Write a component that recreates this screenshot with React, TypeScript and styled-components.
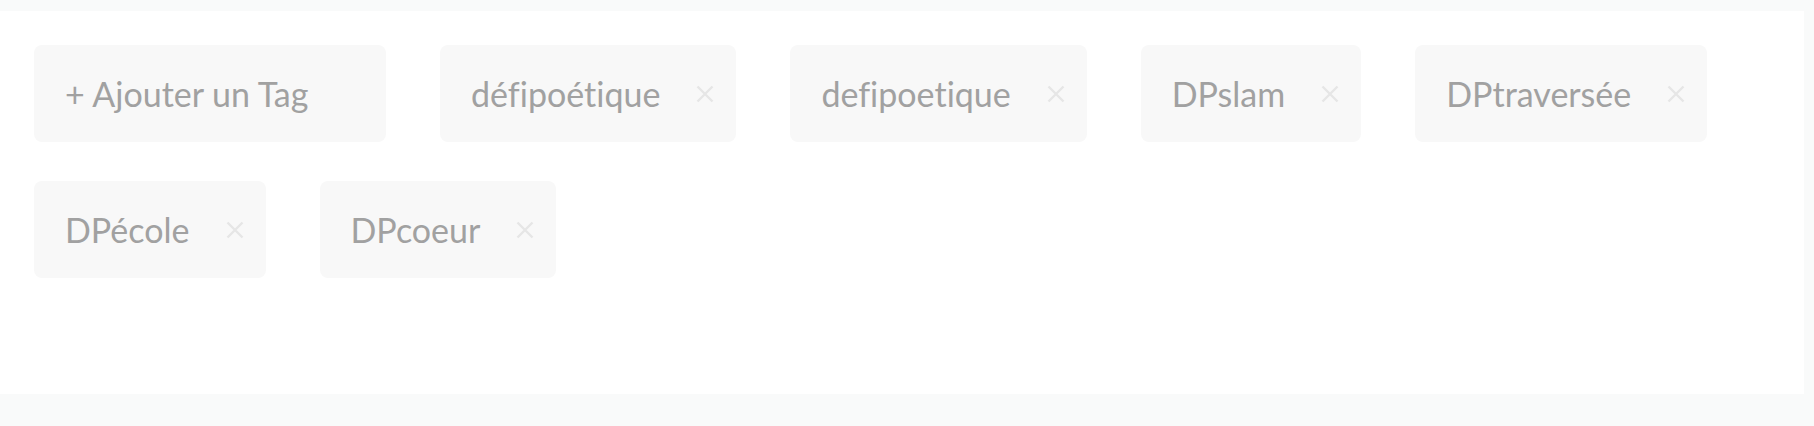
import React from "react";
import styled, { createGlobalStyle } from "styled-components";

const Global = createGlobalStyle`
  html, body { margin: 0; padding: 0; background: #f9fafa; }
  body { font-family: Lato, "Open Sans", sans-serif; }
`;

const Page = styled.div`
  width: 1814px;
  height: 426px;
  padding-top: 11px;
  box-sizing: border-box;
  background: #f9fafa;
`;

const Panel = styled.div`
  width: 1804px;
  height: 383px;
  background: #ffffff;
  box-sizing: border-box;
  padding: 34px 0 0 34px;
`;

const TagList = styled.div`
  display: flex;
  flex-wrap: wrap;
  column-gap: 54px;
  row-gap: 39px;
  width: 1700px;
`;

const TagBox = styled.div<{ $add?: boolean }>`
  display: flex;
  align-items: center;
  height: 97px;
  box-sizing: border-box;
  padding: ${(p) => (p.$add ? "0 0 0 31px" : "0 22px 0 31px")};
  width: ${(p) => (p.$add ? "352px" : "auto")};
  background: #f8f8f8;
  border-radius: 8px;
  font-family: Lato, "Open Sans", sans-serif;
  font-size: 34px;
  color: #a1a1a1;
`;

const Label = styled.span`
  line-height: 1;
  font-variant-ligatures: none;
`;

const Remove = styled.span`
  display: flex;
  margin-left: 36px;
  width: 18px;
  height: 18px;
`;

const CloseIcon = () => (
  <svg width="18" height="18" viewBox="0 0 18 18">
    <path d="M1.5 1.5 L16.5 16.5 M16.5 1.5 L1.5 16.5" stroke="#e6e6e6" strokeWidth="2.4" strokeLinecap="butt" />
  </svg>
);

const tags = ["défipoétique", "defipoetique", "DPslam", "DPtraversée", "DPécole", "DPcoeur"];

export default function App() {
  return (
    <>
      <Global />
      <Page>
        <Panel>
          <TagList>
            <TagBox $add>
              <Label>+ Ajouter un Tag</Label>
            </TagBox>
            {tags.map((t) => (
              <TagBox key={t}>
                <Label>{t}</Label>
                <Remove>
                  <CloseIcon />
                </Remove>
              </TagBox>
            ))}
          </TagList>
        </Panel>
      </Page>
    </>
  );
}
